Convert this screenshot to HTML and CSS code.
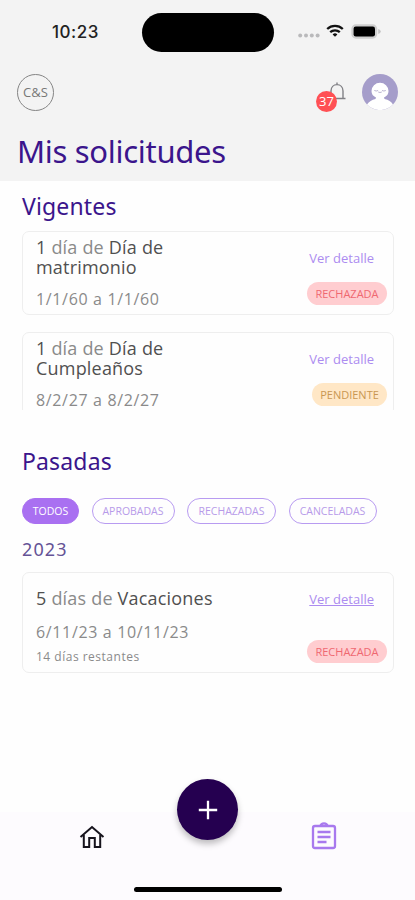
FILE: index.html
```html
<!DOCTYPE html>
<html lang="es">
<head>
  <meta charset="UTF-8">
  <title>Mis solicitudes</title>
  <meta name="viewport" content="width=device-width, initial-scale=1">
  <link rel="stylesheet" href="styles.css">
</head>
<body>

  <!-- Header -->
  <header class="header">
    <div class="status-bar">
      <span class="time">10:23</span>
      <div class="island"></div>
      <div class="status-icons">
        <svg width="22" height="5" viewBox="0 0 22 5" fill="#b9b9bb"><circle cx="2.2" cy="2.5" r="2"/><circle cx="8" cy="2.5" r="2"/><circle cx="13.8" cy="2.5" r="2"/><circle cx="19.6" cy="2.5" r="2"/></svg>
        <svg class="wifi" width="18" height="14" viewBox="0 0 18 14" fill="none" stroke="#111" stroke-width="2.3"><path d="M1.2 5a11.2 11.2 0 0 1 15.6 0"/><path d="M4.2 8.2a7 7 0 0 1 9.6 0"/><path d="M9 12.8 6.6 10.4a3.5 3.5 0 0 1 4.8 0z" fill="#111" stroke="none"/></svg>
        <svg class="battery" width="30" height="15" viewBox="0 0 30 15"><rect x="1" y="1" width="24.6" height="13" rx="4" fill="#cfcfcf" stroke="#cfcfcf" stroke-width="1.3"/><rect x="2.6" y="2.6" width="21.4" height="9.8" rx="2.2" fill="#000"/><path d="M27.2 5v5q2.6-.8 2.6-2.5t-2.6-2.5z" fill="#c4c4c4"/></svg>
      </div>
    </div>
    <div class="top-row">
      <div class="logo">C&amp;S</div>
      <div class="bell">
        <svg width="18" height="19" viewBox="0 0 18 19" fill="none" stroke="#808085" stroke-width="1.4"><path d="M1 16.5h16.5M3 16.5V9C3 5.2 5.6 2.6 9 2.6s6 2.6 6 6.4v7.5M9 .5v2"/></svg>
        <span class="count">37</span>
      </div>
      <svg class="avatar" width="36" height="36" viewBox="0 0 36 36"><circle cx="18" cy="18" r="18" fill="#a59dca"/><path d="M5 30.5q3-4.500 8.500-5.500l.5-1.500q-4.500-2-4.500-6.500a8.500 8.300 0 0 1 17 0q0 4.500-4.500 6.500l.5 1.500q6 1 8.500 5.500A18 18 0 0 1 5 30.500z" fill="#fff"/><path d="M12.3 16.500q1.900 1 3.800 0M20 16.500q1.900 1 3.800 0M16.200 18q1.800 1 3.600 0" fill="none" stroke="#b3adca" stroke-width=".9"/></svg>
    </div>
    <h1>Mis solicitudes</h1>
  </header>

  <main class="content">
    <!-- Vigentes -->
    <h2>Vigentes</h2>
    <div class="current-list">
      <div class="card">
        <div class="info">
          <div class="title"><b>1</b> día de <b>Día de<br>matrimonio</b></div>
          <div class="dates">1/1/60 a 1/1/60</div>
        </div>
        <div class="side">
          <a class="detail">Ver detalle</a>
          <span class="badge rejected">RECHAZADA</span>
        </div>
      </div>
      <div class="card">
        <div class="info">
          <div class="title"><b>1</b> día de <b>Día de<br>Cumpleaños</b></div>
          <div class="dates">8/2/27 a 8/2/27</div>
        </div>
        <div class="side">
          <a class="detail">Ver detalle</a>
          <span class="badge pending">PENDIENTE</span>
        </div>
      </div>
    </div>

    <!-- Pasadas -->
    <h2 class="past-title">Pasadas</h2>
    <div class="filters">
      <button class="chip all active">TODOS</button>
      <button class="chip approved">APROBADAS</button>
      <button class="chip refused">RECHAZADAS</button>
      <button class="chip canceled">CANCELADAS</button>
    </div>
    <h3>2023</h3>
    <div class="card past">
      <div class="info">
        <div class="title"><b>5</b> días de <b>Vacaciones</b></div>
        <div class="dates">6/11/23 a 10/11/23</div>
        <div class="left">14 días restantes</div>
      </div>
      <div class="side">
        <a class="detail underlined">Ver detalle</a>
        <span class="badge rejected">RECHAZADA</span>
      </div>
    </div>
  </main>

  <!-- Bottom navigation -->
  <nav class="taskbar">
    <svg class="home" width="26" height="24" viewBox="0 0 26 24" fill="none" stroke="#17141d" stroke-width="2"><path d="M1.5 12 13 2l11.500 10M4.800 10v12h5.400v-9h5.600v9h5.400V10"/></svg>
    <button class="add"><svg width="20" height="20" viewBox="0 0 20 20" stroke="#fff" stroke-width="2.3"><path d="M10 .8v18.400M.8 10h18.400"/></svg></button>
    <svg class="requests" width="26" height="28" viewBox="0 0 26 28" fill="none" stroke="#a879ee" stroke-width="2.3"><rect x="2" y="4" width="22" height="22" rx="2"/><path d="M9.5 4q.5-2.700 3.500-2.700T16.500 4M6.500 10h13M6.500 15h13M6.500 20h9"/></svg>
    <div class="home-indicator"></div>
  </nav>

</body>
</html>
```
FILE: styles.css
```css
* {
  box-sizing: border-box;
}

body {
  margin: 0;
  height: 900px;
  display: flex;
  flex-direction: column;
  overflow: hidden;
  background: #fefefe;
  color: #8a8a8a;
  font-family: 'Open Sans', 'Noto Sans', sans-serif;
}

h1, h2, h3 {
  margin: 0;
  font-family: 'Noto Sans', sans-serif;
  font-weight: 400;
  color: #3b158c;
  white-space: nowrap;
}

button {
  font-family: inherit;
  padding: 0;
}

/* Header */
.header {
  height: 181px;
  flex: none;
  background: #f3f3f3;
}

.status-bar {
  height: 64px;
  display: grid;
  grid-template-columns: 142px 132px 1fr;
  align-items: center;
}

.time {
  padding-left: 52px;
  font: 500 17px/20px Inter, sans-serif;
  letter-spacing: 0.5px;
  color: #222;
}

.island {
  height: 39px;
  border-radius: 20px;
  background: #000;
}

.status-icons {
  display: flex;
  align-items: center;
  padding-left: 24px;
  margin-top: -2px;
}

.status-icons svg:first-child {
  margin-top: 9px;
}

.wifi {
  margin-left: 6px;
}

.battery {
  margin-left: 7px;
}

.top-row {
  height: 62px;
  display: flex;
  align-items: flex-start;
  padding: 10px 17px 0 17px;
}

.logo {
  width: 37px;
  height: 37px;
  border: 1px solid #858585;
  border-radius: 50%;
  font-size: 13px;
  line-height: 35px;
  text-align: center;
  color: #777;
}

.bell {
  position: relative;
  margin: 8px 16px 0 auto;
  height: 30px;
}

.count {
  position: absolute;
  top: 9px;
  left: -12px;
  width: 21px;
  height: 21px;
  border-radius: 50%;
  background: #ff5054;
  color: #fff;
  font-size: 13px;
  line-height: 21px;
  text-align: center;
}

h1 {
  padding-left: 17px;
  font-size: 31px;
  line-height: 50px;
  letter-spacing: -0.3px;
}

/* Lists */
.content {
  flex: 1;
  padding: 10px 21px 0 22px;
}

h2 {
  height: 40px;
  font-size: 23px;
  line-height: 30px;
  letter-spacing: 0.15px;
}

.current-list {
  height: 179px;
  overflow: hidden;
}

.card {
  height: 84px;
  margin-bottom: 17px;
  padding: 6px 6px 0 13px;
  display: flex;
  justify-content: space-between;
  border: 1px solid #eeeeee;
  border-radius: 7px;
}

.title {
  font-size: 18px;
  line-height: 19.5px;
  letter-spacing: 0.2px;
  white-space: nowrap;
}

.title b {
  font-weight: 500;
  color: #505050;
}

.dates {
  margin-top: 11px;
  font-size: 16px;
  line-height: 22px;
  letter-spacing: 0.65px;
}

.side {
  display: flex;
  flex-direction: column;
  align-items: flex-end;
}

.detail {
  margin: 11px 13px 14px 0;
  font-size: 13px;
  line-height: 19px;
  color: #ac8cf0;
}

.underlined {
  text-decoration: underline;
}

.badge {
  height: 23px;
  border-radius: 12px;
  font-size: 11px;
  line-height: 23px;
  text-align: center;
}

.rejected {
  width: 80px;
  background: #ffcdd0;
  color: #ef6870;
}

.pending {
  width: 75px;
  background: #ffe7c6;
  color: #c99752;
}

.past-title {
  height: 52px;
  margin-top: 36px;
}

.filters {
  display: flex;
  gap: 12.5px;
}

.chip {
  height: 26px;
  border: 1.5px solid #b89bf1;
  border-radius: 13px;
  background: transparent;
  color: #b79be9;
  font-size: 10.5px;
}

.all {
  width: 57px;
}

.approved {
  width: 83px;
}

.refused {
  width: 89px;
}

.canceled {
  width: 88px;
}

.active {
  background: #a970f1;
  border-color: #a970f1;
  color: #fff;
}

h3 {
  height: 48px;
  padding-top: 11px;
  font-size: 18px;
  line-height: 29px;
  letter-spacing: 1.1px;
  color: #655396;
}

.past {
  height: 101px;
}

.past .title {
  padding-top: 10px;
}

.past .dates {
  margin-top: 12px;
}

.past .left {
  margin-top: 1px;
  font-size: 12px;
  line-height: 25px;
  letter-spacing: 0.5px;
}

.past .badge {
  margin-top: 17px;
}

/* Bottom bar */
.taskbar {
  height: 88px;
  flex: none;
  display: grid;
  grid-template-columns: 177px 61px 1fr;
  grid-template-rows: 75px 13px;
  align-items: start;
  background: #fdfbfe;
}

.home {
  margin: 13px 0 0 79px;
}

.add {
  width: 61px;
  height: 61px;
  margin-top: -33px;
  display: flex;
  align-items: center;
  justify-content: center;
  border: none;
  border-radius: 50%;
  background: #250050;
  box-shadow: 0 4px 6px rgba(0, 0, 0, 0.25);
}

.requests {
  margin: 10px 0 0 73px;
}

.home-indicator {
  grid-column: 1 / 4;
  width: 148px;
  height: 5px;
  margin: 0 auto;
  border-radius: 3px;
  background: #000;
}
```
